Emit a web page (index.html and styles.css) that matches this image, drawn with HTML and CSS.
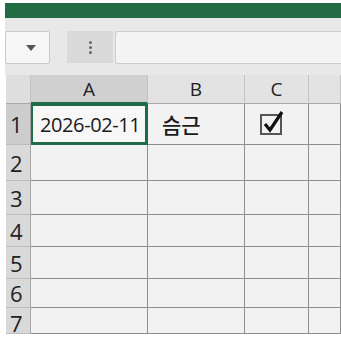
FILE: index.html
```html
<!doctype html>
<html>

<head>
	<meta charset=utf-8>
	<title>Sheet</title>
	<meta name=viewport content="width=device-width, initial-scale=1">
	<link rel="stylesheet" href="styles.css">
</head>

<body>
	<div class="app">
		<div class="ribbon"></div>

		<div class="toolbar">
			<div class="namebox"><span class="caret"></span></div>
			<div class="more"><span></span><span></span><span></span></div>
			<div class="formula"></div>
		</div>

		<div class="sheet">
			<div class="hd corner"></div>
			<div class="hd col sel">A</div>
			<div class="hd col">B</div>
			<div class="hd col">C</div>
			<div class="hd col"></div>

			<div class="rh sel r1">1</div>
			<div class="cell active date">2026-02-11</div>
			<div class="cell ko">슴근</div>
			<div class="cell chk">
				<svg width="28" height="26" viewBox="0 0 28 26">
					<rect x="2" y="5" width="20" height="19" fill="none" stroke="#555" stroke-width="2"/>
					<path d="M6 14 L11 20 L23 2" fill="none" stroke="#111" stroke-width="3.2" stroke-linejoin="miter"/>
				</svg>
			</div>
			<div class="cell"></div>

			<div class="rh r2">2</div><div class="cell"></div><div class="cell"></div><div class="cell"></div><div class="cell"></div>
			<div class="rh r3">3</div><div class="cell"></div><div class="cell"></div><div class="cell"></div><div class="cell"></div>
			<div class="rh r4">4</div><div class="cell"></div><div class="cell"></div><div class="cell"></div><div class="cell"></div>
			<div class="rh r5">5</div><div class="cell"></div><div class="cell"></div><div class="cell"></div><div class="cell"></div>
			<div class="rh r6">6</div><div class="cell"></div><div class="cell"></div><div class="cell"></div><div class="cell"></div>
			<div class="rh r7">7</div><div class="cell"></div><div class="cell"></div><div class="cell"></div><div class="cell"></div>
		</div>
	</div>
</body>
</html>
```

FILE: styles.css
```css
html, body{
	margin: 0; padding: 0;
	background-color: #fff;
	font-family: "Open Sans", "Noto Sans CJK KR", sans-serif;
	color: #1a1a1a;
}

*, *:after, *:before{
	box-sizing: border-box;
}

.app{
	margin-left: 5px;
	padding-top: 3px;
	width: 336px;
}

.ribbon{
	height: 15px;
	background-color: #216b45;
}

.toolbar{
	display: flex;
	background-color: #e8e8e8;
	padding: 13px 0 11px 0;
}

.namebox{
	width: 45px;
	height: 33px;
	background-color: #f6f6f6;
	border: 1px solid #c9c9c9;
	border-radius: 2px;
	display: flex;
	align-items: center;
	justify-content: center;
}

.caret{
	width: 0; height: 0;
	border-left: 5px solid transparent;
	border-right: 5px solid transparent;
	border-top: 6px solid #555;
	margin-left: 6px;
}

.more{
	width: 46px;
	height: 32px;
	margin-left: 17px;
	background-color: #dadada;
	display: flex;
	flex-direction: column;
	align-items: center;
	justify-content: center;
	gap: 2px;
}

.more span{
	width: 3px; height: 3px;
	border-radius: 50%;
	background-color: #666;
}

.formula{
	flex: 1;
	height: 33px;
	margin-left: 2px;
	background-color: #f4f4f4;
	border: 1px solid #cdcdcd;
	border-right: none;
	border-radius: 3px 0 0 3px;
}

.sheet{
	margin-left: 1px;
	display: grid;
	grid-template-columns: 25px 117px 97px 64px 1fr;
	grid-template-rows: 29px 41px 36px 34px 32px 32px 29px 26px;
	overflow: hidden;
	background-color: #e2e2e2;
}

.hd{
	background-color: #e3e3e3;
	border-right: 1px solid #c4c4c4;
	border-bottom: 1px solid #a8a8a8;
	font-size: 19px;
	display: flex;
	align-items: center;
	justify-content: center;
	color: #222;
}

.hd.corner{
	background-color: #dedede;
}

.hd.sel{
	background-color: #d0d0d0;
	border-bottom: 2px solid #1e6b48;
}

.rh{
	background-color: #d9d9d9;
	border-right: 1px solid #a6a6a6;
	border-bottom: 1px solid #bdbdbd;
	font-size: 22px;
	display: flex;
	align-items: center;
	padding-left: 4px;
	overflow: hidden;
	color: #222;
}

.rh.sel{
	background-color: #cdcdcd;
}

.rh.r7{
	align-items: flex-start;
	line-height: 30px;
}

.cell{
	background-color: #f2f2f2;
	border-right: 1px solid #8e8e8e;
	border-bottom: 1px solid #8e8e8e;
	display: flex;
	align-items: center;
}

.cell.active{
	background-color: #f7f7f7;
	box-shadow: inset 0 0 0 2px #1e6b48;
	border-color: #1e6b48;
}

.date{
	font-size: 20px;
	padding-left: 9px;
	letter-spacing: -0.4px;
}

.ko{
	font-family: "Noto Sans CJK KR", sans-serif;
	font-weight: 500;
	font-size: 21px;
	padding-left: 14px;
}

.chk{
	padding-left: 14px;
	padding-bottom: 2px;
}
```
